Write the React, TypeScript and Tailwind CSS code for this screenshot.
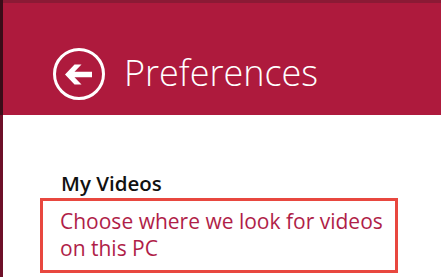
import React from "react";

export default function App() {
  return (
    <div className="flex w-[441px] h-[277px] overflow-hidden bg-white" style={{ fontFamily: '"Open Sans", "Noto Sans", sans-serif' }}>
      <div className="w-[3px] h-full flex flex-col">
        <div className="h-[115px] bg-[#3a0c18]" />
        <div className="flex-1 bg-[#6e1029]" />
      </div>
      <div className="flex-1 flex flex-col">
        <div className="h-[3px] bg-[#8b1a35]" />
        <div className="h-[112px] bg-[#ae1a3d] flex items-center pl-[50px] pt-[30px]">
          <svg width="52" height="52" viewBox="0 0 52 52" className="shrink-0">
            <circle cx="26" cy="26" r="24.5" fill="none" stroke="#fff" strokeWidth="3" />
            <path d="M12 26.5 L21.5 16.5 H28.5 L21.5 23.7 H39 V29.3 H21.5 L28.5 36.5 H21.5 Z" fill="#fff" />
          </svg>
          <div className="ml-[19px] -mt-[2px] text-[36px] font-light text-white leading-none">Preferences</div>
        </div>
        <div className="flex-1 pl-[37px] pt-[55px]">
          <div className="pl-[21px] text-[20.5px] font-semibold text-[#111] leading-[26px]">My Videos</div>
          <div className="mt-[2px] w-[358px] h-[75px] border-[3px] border-[#e8473f] pl-[17px] pt-[7px] text-[21px] leading-[27px] text-[#b01e48]">
            Choose where we look for videos on this PC
          </div>
        </div>
      </div>
    </div>
  );
}
